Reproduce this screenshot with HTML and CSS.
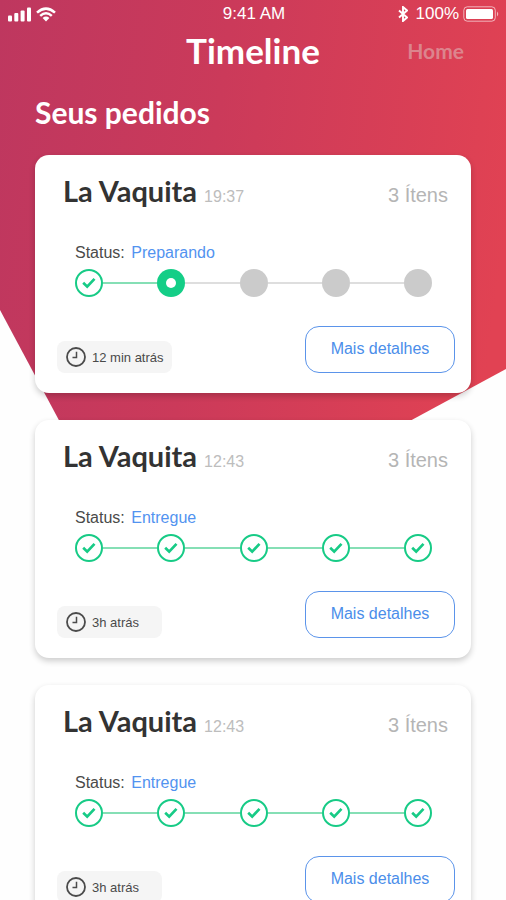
FILE: index.html
```html
<!DOCTYPE html>
<html lang="pt-BR">
<head>
<meta charset="utf-8">
<meta name="viewport" content="width=device-width, initial-scale=1">
<title>Timeline</title>
<link rel="stylesheet" href="styles.css">
</head>
<body>
<svg class="sprite" aria-hidden="true">
  <symbol id="done" viewBox="0 0 28 28">
    <circle cx="14" cy="14" r="13" fill="#fff" stroke="#17cb86" stroke-width="2"/>
    <path d="M8.200 13.700l4 3.900 7.300-7.800" fill="none" stroke="#17cb86" stroke-width="2.700"/>
  </symbol>
  <symbol id="current" viewBox="0 0 28 28">
    <circle cx="14" cy="14" r="14" fill="#14ce87"/>
    <circle cx="14" cy="14" r="5" fill="#fff"/>
  </symbol>
  <symbol id="pending" viewBox="0 0 28 28">
    <circle cx="14" cy="14" r="14" fill="#cbcbcb"/>
  </symbol>
  <symbol id="clock" viewBox="0 0 20 20">
    <circle cx="10" cy="10" r="9" fill="none" stroke="#4b4b4b" stroke-width="1.800"/>
    <path d="M10.500 4.800v5.700H6.500" fill="none" stroke="#4b4b4b" stroke-width="1.500"/>
  </symbol>
</svg>
<div class="screen">
  <div class="backdrop"></div>
  <div class="statusbar">
    <div class="signal">
      <svg width="24" height="15" viewBox="0 0 24 15" fill="#fff" aria-hidden="true">
        <rect x="0" y="8.500" width="4" height="6" rx="1"/><rect x="6.300" y="6" width="4" height="8.500" rx="1"/><rect x="12.600" y="3.500" width="4" height="11" rx="1"/><rect x="19" y="0.500" width="4" height="14" rx="1"/>
      </svg>
      <svg width="20" height="15" viewBox="0 0 20 15" fill="none" stroke="#fff" stroke-width="2.500" aria-hidden="true">
        <path d="M1 5.600Q10-2.400 19 5.600M4.200 8.900Q10 3.700 15.800 8.900"/>
        <path d="M6.600 10.900Q10 8 13.400 10.900L10 14.500z" fill="#fff" stroke="none"/>
      </svg>
    </div>
    <span class="clock">9:41 AM</span>
    <div class="power">
      <svg width="10" height="16" viewBox="0 0 10 16" fill="none" stroke="#fff" stroke-width="1.900" aria-hidden="true"><path d="M1 4.500l8 7-4 3.500V1l4 3.500-8 7"/></svg>
      <span>100%</span>
      <svg width="37" height="16" viewBox="0 0 37 16" aria-hidden="true">
        <rect x="0.800" y="0.800" width="31.500" height="14.400" rx="3.500" fill="none" stroke="#fff" stroke-opacity=".6"/>
        <rect x="3" y="3" width="27" height="10" rx="1.500" fill="#fff"/>
        <path d="M34 5.500q2.500 2.500 0 5z" fill="#fff" fill-opacity=".6"/>
      </svg>
    </div>
  </div>
  <header class="topbar">
    <h1>Timeline</h1>
    <a href="#">Home</a>
  </header>
  <main>
    <h2>Seus pedidos</h2>
    <article class="card">
      <div class="head"><h3>La Vaquita</h3><time>19:37</time><span class="items">3 Ítens</span></div>
      <p class="status">Status: <span>Preparando</span></p>
      <div class="steps">
        <svg><use href="#done"/></svg><i class="line reached"></i><svg><use href="#current"/></svg><i class="line"></i><svg><use href="#pending"/></svg><i class="line"></i><svg><use href="#pending"/></svg><i class="line"></i><svg><use href="#pending"/></svg>
      </div>
      <div class="foot"><span class="ago"><svg><use href="#clock"/></svg>12 min atrás</span><button type="button">Mais detalhes</button></div>
    </article>
    <article class="card">
      <div class="head"><h3>La Vaquita</h3><time>12:43</time><span class="items">3 Ítens</span></div>
      <p class="status">Status: <span>Entregue</span></p>
      <div class="steps">
        <svg><use href="#done"/></svg><i class="line reached"></i><svg><use href="#done"/></svg><i class="line reached"></i><svg><use href="#done"/></svg><i class="line reached"></i><svg><use href="#done"/></svg><i class="line reached"></i><svg><use href="#done"/></svg>
      </div>
      <div class="foot"><span class="ago"><svg><use href="#clock"/></svg>3h atrás</span><button type="button">Mais detalhes</button></div>
    </article>
    <article class="card">
      <div class="head"><h3>La Vaquita</h3><time>12:43</time><span class="items">3 Ítens</span></div>
      <p class="status">Status: <span>Entregue</span></p>
      <div class="steps">
        <svg><use href="#done"/></svg><i class="line reached"></i><svg><use href="#done"/></svg><i class="line reached"></i><svg><use href="#done"/></svg><i class="line reached"></i><svg><use href="#done"/></svg><i class="line reached"></i><svg><use href="#done"/></svg>
      </div>
      <div class="foot"><span class="ago"><svg><use href="#clock"/></svg>3h atrás</span><button type="button">Mais detalhes</button></div>
    </article>
  </main>
</div>
</body>
</html>
```
FILE: styles.css
```css
* {
  box-sizing: border-box;
}

body,
h1,
h2,
h3,
p {
  margin: 0;
}

body {
  background: #fefefe;
  color: #4a4a4a;
  font-family: "Liberation Sans", Arial, sans-serif;
}

h1,
h2,
h3,
.topbar a {
  font-family: Lato, sans-serif;
  font-weight: 700;
}

.sprite {
  position: absolute;
  width: 0;
  height: 0;
}

.screen {
  position: relative;
  height: 100vh;
  overflow: hidden;
}

/* Tilted coloured sheet behind the first orders */
.backdrop {
  position: absolute;
  inset: 0 0 auto;
  z-index: -1;
  height: 568px;
  background: linear-gradient(98deg, #be375f, #cb3a5a 40%, #e14253 92%);
  clip-path: polygon(0 0, 100% 0, 100% 369px, 138px 100%, 0 310px);
}

.statusbar,
.topbar {
  display: grid;
  grid-template-columns: 1fr auto 1fr;
  align-items: center;
  color: #fff;
}

.statusbar {
  height: 28px;
  padding: 0 6px 0 8px;
  font-size: 17px;
}

.signal,
.power {
  display: flex;
  align-items: center;
  gap: 4px;
}

.power {
  justify-content: flex-end;
}

.power span {
  margin-left: 4px;
}

.topbar {
  height: 44px;
  padding: 0 42px;
}

.topbar h1 {
  grid-column: 2;
  font-size: 35px;
  line-height: 44px;
}

.topbar a {
  justify-self: end;
  color: rgba(222, 180, 180, .6);
  font-size: 21px;
  text-decoration: none;
}

main {
  display: flex;
  flex-direction: column;
  gap: 27px;
  padding: 24px 35px;
}

h2 {
  color: #fff;
  font-size: 30px;
  line-height: 32px;
}

.card {
  padding: 21px 16px 20px 22px;
  border-radius: 14px;
  background: #fff;
  box-shadow: 0 3px 6px rgba(0, 0, 0, .2);
}

.head {
  display: flex;
  align-items: baseline;
  gap: 7px;
  height: 30px;
  padding: 0 7px 0 6px;
  line-height: 30px;
}

.head h3 {
  color: #333;
  font-size: 29px;
}

.head time {
  color: #bdbdbd;
  font-size: 16px;
}

.items {
  margin-left: auto;
  color: #b5b5b5;
  font-size: 20px;
}

.status {
  margin: 37px 18px 6px;
  font-size: 16px;
  line-height: 20px;
}

.status span {
  margin-left: 2px;
  color: #5293f0;
}

.steps {
  display: flex;
  align-items: center;
  margin: 0 23px 29px 18px;
}

.steps svg {
  flex: none;
  width: 28px;
  height: 28px;
}

.line {
  flex: 1;
  height: 2px;
  background: #dedede;
}

.line.reached {
  background: #85dfb5;
}

.foot {
  display: flex;
  align-items: flex-end;
  justify-content: space-between;
}

.ago {
  display: flex;
  align-items: center;
  gap: 6px;
  min-width: 105px;
  height: 32px;
  padding: 0 8px 0 9px;
  border-radius: 8px;
  background: #f5f5f5;
  font-size: 13px;
}

.ago svg {
  width: 20px;
  height: 20px;
}

button {
  width: 150px;
  height: 47px;
  padding: 0 0 2px;
  border: 1px solid #5b94ea;
  border-radius: 14px;
  background: #fff;
  color: #4b8eea;
  font: 16px "Liberation Sans", Arial, sans-serif;
}
```
